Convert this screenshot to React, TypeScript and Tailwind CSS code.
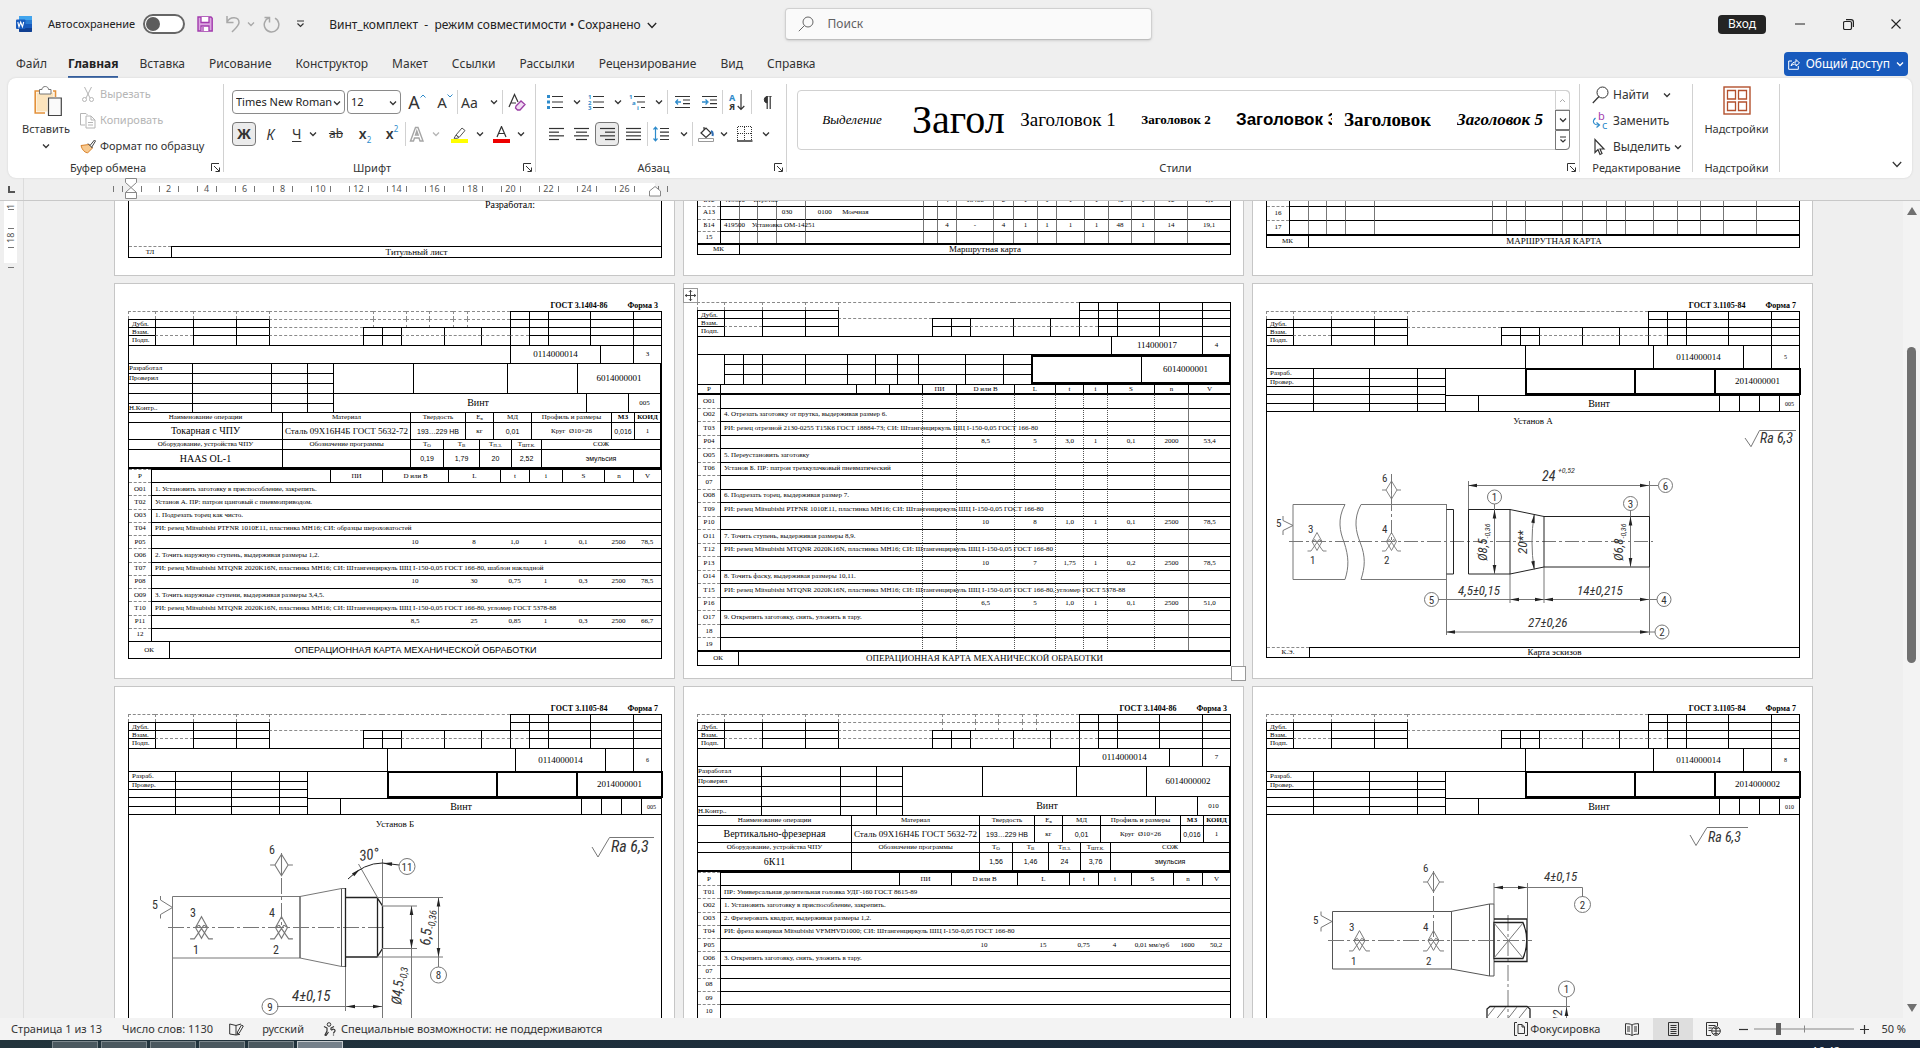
import React from 'react';

type Kids = { children?: React.ReactNode };

/* ---------- shared small pieces ---------- */

function Svg({ w, h, className = '', children }: { w: number; h: number; className?: string } & Kids) {
  return (
    <svg width={w} height={h} viewBox={`0 0 ${w} ${h}`} fill="none" stroke="currentColor" className={`shrink-0 ${className}`} aria-hidden="true">
      {children}
    </svg>
  );
}

function Chevron({ className = '' }: { className?: string }) {
  return (
    <Svg w={8} h={6} className={className}>
      <path d="M1 1.500 4 4.500 7 1.500" strokeWidth="1.300" />
    </Svg>
  );
}

function Divider() {
  return <span className="h-6 w-px shrink-0 bg-[#d1d1d1]" />;
}

function Launcher() {
  return (
    <button aria-label="Параметры" className="absolute right-1 bottom-1.5 text-[#333]">
      <Svg w={9} h={9}>
        <path d="M.5 8V.5H8M3 3l5 5M8.500 4.500V8.500H4.500" />
      </Svg>
    </button>
  );
}

function Group({ className, label, launcher, children }: { className: string; label: string; launcher?: boolean } & Kids) {
  return (
    <section className={`relative flex h-[100px] shrink-0 flex-col ${className}`}>
      <div className="min-h-0 flex-1">{children}</div>
      <div className={`pb-0.5 text-center text-[11px] leading-4 text-[#333] ${launcher ? 'pr-4' : ''}`}>{label}</div>
      {launcher && <Launcher />}
      <span className="absolute top-1.5 right-0 bottom-1.5 w-px bg-[#d1d1d1]" />
    </section>
  );
}

/* ---------- title bar ---------- */

function TitleBar() {
  return (
    <header className="flex h-12 items-center text-[12px] text-[#222]">
      <div className="flex min-w-0 flex-1 items-center pl-4">
        <Svg w={16} h={16}>
          <rect x="3" y="0" width="13" height="16" rx="1" fill="#2b7cd3" stroke="none" />
          <path d="M3 1a1 1 0 0 1 1-1h11a1 1 0 0 1 1 1v3H3z" fill="#41a5ee" stroke="none" />
          <path d="M3 8h13v4H3z" fill="#185abd" stroke="none" />
          <path d="M3 12h13v3a1 1 0 0 1-1 1H4a1 1 0 0 1-1-1z" fill="#103f91" stroke="none" />
          <rect x="0" y="3.500" width="9.500" height="9.500" rx="1" fill="#185abd" stroke="none" />
          <path d="M1.800 6 3 10.800 4.700 6.200 6.400 10.800 7.700 6" stroke="#fff" strokeWidth="1.100" />
        </Svg>
        <label className="ml-4 flex items-center gap-2">
          <span className="text-[11px] whitespace-nowrap">Автосохранение</span>
          <span className="relative flex h-5 w-[42px] items-center rounded-full border-2 border-[#666] bg-white">
            <input type="checkbox" className="absolute inset-0 appearance-none" />
            <span className="ml-px h-3.5 w-3.5 rounded-full bg-[#5c5c5c]" />
          </span>
        </label>
        <button aria-label="Сохранить" className="ml-3 text-[#a23bad]">
          <Svg w={16} h={16}>
            <path d="M1 1h13l1.200 1.200V15H1z" fill="#dba5e0" strokeWidth="1.400" />
            <path d="M4 1v5.500h8V1" fill="#fff" strokeWidth="1.300" />
            <path d="M4 15v-5h8v5" fill="#fff" strokeWidth="1.300" />
            <path d="M6 11v4" strokeWidth="1.300" />
          </Svg>
        </button>
        <button aria-label="Отменить" className="ml-3 flex items-center gap-1.5 text-[#a8a8a8]">
          <Svg w={16} h={18}>
            <path d="M2 1v6.500h6.500M2 7.200C5 1 14 1.500 14 7.500c0 3-3 5.500-7 9.500" strokeWidth="1.500" />
          </Svg>
          <Chevron />
        </button>
        <button aria-label="Повторить" className="ml-2 text-[#a8a8a8]">
          <Svg w={17} h={17}>
            <path d="M1.500 1.500H6.500V6.500M6 1.800A7.300 7.300 0 1 0 12 2.200" strokeWidth="1.500" />
          </Svg>
        </button>
        <button aria-label="Настройка панели" className="ml-4 text-[#333]">
          <Svg w={9} h={8}>
            <path d="M1 1h7M1.500 3.500l3 3 3-3" strokeWidth="1.200" />
          </Svg>
        </button>
        <button className="ml-6 flex items-center gap-1.5 pt-0.5 whitespace-pre">
          <span>Винт_комплект&nbsp; - &nbsp;режим совместимости • Сохранено</span>
          <Svg w={10} h={7}>
            <path d="M.8 1 5 5.500 9.200 1" strokeWidth="1.300" />
          </Svg>
        </button>
      </div>
      <label className="flex h-8 w-[367px] items-center gap-3.5 rounded border border-[#d0d0d0] border-b-[#bdbdbd] bg-[#fafafa] px-3 shadow-sm">
        <Svg w={16} h={16} className="text-[#666]">
          <circle cx="10" cy="6" r="5" />
          <path d="M6.500 9.500.8 15.200" />
        </Svg>
        <input aria-label="Поиск" placeholder="Поиск" className="w-full bg-transparent text-[12px] outline-none placeholder:text-[#616161]" />
      </label>
      <div className="flex min-w-0 flex-1 items-center justify-end">
        <button className="mr-2.5 h-[19px] w-12 rounded-sm bg-[#242424] text-[12px] leading-none text-white">Вход</button>
        <button aria-label="Свернуть" className="flex h-8 w-12 items-center justify-center">
          <Svg w={10} h={2}>
            <path d="M0 1h10" />
          </Svg>
        </button>
        <button aria-label="Развернуть" className="flex h-8 w-12 items-center justify-center">
          <Svg w={11} h={11}>
            <rect x=".5" y="2.500" width="8" height="8" rx="1.500" strokeWidth="1.200" />
            <path d="M3 .6h5a2.400 2.400 0 0 1 2.400 2.400V8" strokeWidth="1.200" />
          </Svg>
        </button>
        <button aria-label="Закрыть" className="flex h-8 w-12 items-center justify-center">
          <Svg w={10} h={10}>
            <path d="M.5.5l9 9M9.500.5l-9 9" strokeWidth="1.100" />
          </Svg>
        </button>
      </div>
    </header>
  );
}

const TABS = ['Файл', 'Главная', 'Вставка', 'Рисование', 'Конструктор', 'Макет', 'Ссылки', 'Рассылки', 'Рецензирование', 'Вид', 'Справка'];

function TabBar() {
  return (
    <nav className="flex h-[30px] items-center justify-between pt-px pr-3 pl-1 text-[12px] text-[#333]">
      <div className="flex">
        {TABS.map((t) =>
          t === 'Главная' ? (
            <button key={t} className="h-7 px-[9px]">
              <span className="border-b-2 border-[#2b579a] pb-1 font-bold text-[#222]">{t}</span>
            </button>
          ) : (
            <button key={t} className="h-7 px-3">{t}</button>
          ),
        )}
      </div>
      <button className="flex h-6 items-center gap-1.5 rounded bg-[#185abd] px-1 text-white">
        <Svg w={12} h={12}>
          <path d="M4 3H.7v8.300h9.600V8M3 8c.5-3 2.500-4 5-4V1.500L11.500 5 8 8V6C6 6 4 6.500 3 8z" />
        </Svg>
        Общий доступ
        <Chevron />
      </button>
    </nav>
  );
}

/* ---------- ribbon ---------- */

function Lines({ rows }: { rows: [number, number][] }) {
  return (
    <Svg w={15} h={14}>
      {rows.map(([a, b], i) => (
        <path key={i} d={`M${a} ${1.5 + i * 3.67}H${b}`} strokeWidth="1.200" />
      ))}
    </Svg>
  );
}

function IconBtn({ label, w, children }: { label: string; w: string } & Kids) {
  return (
    <button aria-label={label} className={`flex h-6 shrink-0 items-center justify-center ${w}`}>
      {children}
    </button>
  );
}

function SplitBtn({ label, w, dim, children }: { label: string; w: string; dim?: boolean } & Kids) {
  return (
    <button aria-label={label} className={`flex h-6 shrink-0 items-center justify-between pr-1 pl-[3px] ${w}`}>
      {children}
      <Chevron className={dim ? 'text-[#b5b5b5]' : ''} />
    </button>
  );
}

function Combo({ label, value, w }: { label: string; value: string; w: string }) {
  return (
    <span className={`relative flex h-6 shrink-0 ${w}`}>
      <select aria-label={label} className="h-6 w-full appearance-none rounded border border-[#8a8a8a] bg-white pr-3 pl-[3px] text-[11px] text-[#222]">
        <option>{value}</option>
      </select>
      <Chevron className="pointer-events-none absolute top-[10px] right-1" />
    </span>
  );
}

function Clipboard() {
  return (
    <Group className="w-[216px]" label="Буфер обмена" launcher>
      <div className="flex pt-2 pl-3">
        <button className="flex w-[52px] flex-col items-center text-[11px] leading-4 text-[#333]">
          <Svg w={28} h={31} className="ml-1">
            <path d="M9 5H1.200v22H11M19 5h2.500v6" stroke="#e3913a" strokeWidth="1.600" />
            <path d="M2.500 6.500h17v5h-6v14h-11z" fill="#fce4bd" stroke="none" />
            <path d="M5.500 3.500h2.500c0-4 6.500-4 6.500 0H17V8H5.500z" fill="#fff" stroke="#777" />
            <path d="M14.500 12h12.800v17.500H14.500z" fill="#fafafa" stroke="#444" strokeWidth="1.200" />
          </Svg>
          <span className="mt-1">Вставить</span>
          <Chevron className="mt-1.5" />
        </button>
        <div className="ml-2 flex flex-col gap-2.5 text-[11px] leading-4 text-[#b5b5b5]">
          <button className="flex h-4 items-center gap-1">
            <Svg w={16} h={17}>
              <path d="M4.500 1 10 12M11.500 1 6 12" />
              <circle cx="4.500" cy="13.500" r="2" />
              <circle cx="11.500" cy="13.500" r="2" />
            </Svg>
            Вырезать
          </button>
          <button className="flex h-4 items-center gap-1">
            <Svg w={16} h={17}>
              <path d="M5 13H.5V1.500H6l1.500 1.500" />
              <path d="M6 4h5l4 4v8H6zM11 4v4h4M8 10.500h5M8 13h5" />
            </Svg>
            Копировать
          </button>
          <button className="flex h-4 items-center gap-1 whitespace-nowrap text-[#333]">
            <Svg w={16} h={17}>
              <path d="M9 6.500 1 7.500c1 4 3 6.500 6.500 7.500l5-5z" fill="#f7c98f" stroke="#d9822b" />
              <path d="M8 5.500 12.500 10M10 7.500l4.500-5.500 1 1-4 6.500" fill="#fff" stroke="#444" />
            </Svg>
            Формат по образцу
          </button>
        </div>
      </div>
    </Group>
  );
}

function FontGroup() {
  return (
    <Group className="w-[312px]" label="Шрифт" launcher>
      <div className="flex items-center pt-3 pl-2">
        <Combo label="Шрифт" value="Times New Roman" w="w-[113px]" />
        <span className="w-0.5" />
        <Combo label="Размер шрифта" value="12" w="w-[54px]" />
        <IconBtn label="Увеличить размер" w="w-8">
          <span className="text-[18px] leading-none">A</span>
          <Svg w={6} h={4} className="mb-3 text-[#2e8bcb]"><path d="M.5 3.500 3 1l2.500 2.500" /></Svg>
        </IconBtn>
        <IconBtn label="Уменьшить размер" w="w-6">
          <span className="text-[15px] leading-none">A</span>
          <Svg w={6} h={4} className="mb-3 text-[#2e8bcb]"><path d="M.5.5 3 3 5.500.5" /></Svg>
        </IconBtn>
        <Divider />
        <SplitBtn label="Регистр" w="w-11"><span className="text-[14px]">Aa</span></SplitBtn>
        <Divider />
        <IconBtn label="Очистить формат" w="w-7">
          <Svg w={18} h={18}>
            <path d="M1 14 6.500 1.500 10 9M3 10h5" strokeWidth="1.200" />
            <path d="m8 13 5-5 4 3.500-5 5.500H9.500L7.500 15z" stroke="#9b3fa5" strokeWidth="1.300" fill="#f1dcf3" />
          </Svg>
        </IconBtn>
      </div>
      <div className="flex items-center pt-2 pl-2">
        <button className="h-6 w-6 rounded border border-[#777] bg-[#ebebeb] text-[14px] leading-none font-bold">Ж</button>
        <IconBtn label="Курсив" w="w-[29px]"><span className="text-[14px] italic">К</span></IconBtn>
        <SplitBtn label="Подчёркнутый" w="w-9"><span className="pl-1 text-[14px] leading-4 underline underline-offset-2">Ч</span></SplitBtn>
        <IconBtn label="Зачёркнутый" w="w-[30px]"><span className="text-[12px] line-through">ab</span></IconBtn>
        <IconBtn label="Подстрочный" w="w-7">
          <span className="text-[14px] leading-none font-semibold">x</span>
          <span className="mt-3 text-[8px] leading-none text-[#2e8bcb]">2</span>
        </IconBtn>
        <IconBtn label="Надстрочный" w="w-[26px]">
          <span className="text-[14px] leading-none font-semibold">x</span>
          <span className="mb-2.5 text-[8px] leading-none text-[#2e8bcb]">2</span>
        </IconBtn>
        <Divider />
        <SplitBtn label="Эффекты" w="w-[38px]" dim>
          <Svg w={16} h={17} className="text-[#a5a5a5]">
            <path d="M1.500 15 6.500 1.500h2.500L14 15h-3l-1-3H5.500l-1 3zM6.500 9h2.700L7.800 5z" strokeWidth="1.400" />
          </Svg>
        </SplitBtn>
        <SplitBtn label="Цвет выделения" w="w-11">
          <Svg w={17} h={17} className="ml-1">
            <path d="m5 9 6-7 3 2.500-6 7zM5 9l3 2.500-2 .8H3z" stroke="#555" />
            <path d="M0 13h17v4H0z" fill="#ffff00" stroke="none" />
          </Svg>
        </SplitBtn>
        <SplitBtn label="Цвет текста" w="w-[41px]">
          <Svg w={17} h={17} className="ml-0.5">
            <path d="M4 11 8.500.5 13 11M5.500 7.500h6" strokeWidth="1.200" />
            <path d="M0 13h17v4H0z" fill="#ee0000" stroke="none" />
          </Svg>
        </SplitBtn>
      </div>
    </Group>
  );
}

function ParagraphGroup() {
  const num = 'fill-[#2e8bcb] stroke-none text-[6px] font-bold';
  return (
    <Group className="w-[251px]" label="Абзац" launcher>
      <div className="flex items-center pt-3 pl-2">
        <SplitBtn label="Маркеры" w="w-[41px]">
          <Svg w={16} h={16}>
            <path d="M5 2.500h11M5 8h11M5 13.500h11" strokeWidth="1.200" />
            <path d="M0 1h3v3H0zM0 6.500h3v3H0zM0 12h3v3H0z" fill="#2e8bcb" stroke="none" />
          </Svg>
        </SplitBtn>
        <SplitBtn label="Нумерация" w="w-[41px]">
          <Svg w={16} h={16}>
            <path d="M5 2.500h11M5 8h11M5 13.500h11" strokeWidth="1.200" />
            <text x="0" y="5" className={num}>1</text>
            <text x="0" y="10.500" className={num}>2</text>
            <text x="0" y="16" className={num}>3</text>
          </Svg>
        </SplitBtn>
        <SplitBtn label="Многоуровневый список" w="w-[41px]">
          <Svg w={16} h={16}>
            <path d="M5 2.500h11M8 8h8M12 13.500h4" strokeWidth="1.200" />
            <text x="0" y="5" className={num}>1</text>
            <text x="3" y="10.500" className={num}>a</text>
            <text x="8" y="16" className={num}>i</text>
          </Svg>
        </SplitBtn>
        <Divider />
        <IconBtn label="Уменьшить отступ" w="w-[29px]">
          <Svg w={15} h={14}>
            <path d="M0 1.500h15M8 5h7M8 8.700h7M0 12.500h15" strokeWidth="1.200" />
            <path d="M6 7H1M3 4.500.7 7 3 9.500" stroke="#2e8bcb" strokeWidth="1.300" />
          </Svg>
        </IconBtn>
        <IconBtn label="Увеличить отступ" w="w-[25px]">
          <Svg w={15} h={14}>
            <path d="M0 1.500h15M8 5h7M8 8.700h7M0 12.500h15" strokeWidth="1.200" />
            <path d="M0 7h5M3.500 4.500 6 7 3.500 9.500" stroke="#2e8bcb" strokeWidth="1.300" />
          </Svg>
        </IconBtn>
        <Divider />
        <IconBtn label="Сортировка" w="w-7">
          <span className="flex flex-col text-[9px] leading-[9px] font-bold"><span className="text-[#2e8bcb]">А</span><span>Я</span></span>
          <Svg w={8} h={17} className="ml-0.5"><path d="M4 0v15.500M.7 12 4 15.500 7.300 12" strokeWidth="1.200" /></Svg>
        </IconBtn>
        <Divider />
        <IconBtn label="Знаки абзаца" w="w-[29px]">
          <Svg w={10} h={13}>
            <path d="M5 0h5M5 7a3.300 3.300 0 0 1 0-6.500z" fill="currentColor" />
            <path d="M5.200 0v13M8.200 0v13" strokeWidth="1.200" />
          </Svg>
        </IconBtn>
      </div>
      <div className="flex items-center pt-2 pl-2">
        <IconBtn label="По левому краю" w="w-6"><Lines rows={[[0, 15], [0, 10], [0, 15], [0, 10]]} /></IconBtn>
        <IconBtn label="По центру" w="w-[27px]"><Lines rows={[[0, 15], [2, 13], [0, 15], [2, 13]]} /></IconBtn>
        <button aria-label="По правому краю" className="flex h-6 w-6 shrink-0 items-center justify-center rounded border border-[#777] bg-[#ebebeb]">
          <Lines rows={[[0, 15], [5, 15], [0, 15], [5, 15]]} />
        </button>
        <IconBtn label="По ширине" w="w-7"><Lines rows={[[0, 15], [0, 15], [0, 15], [0, 15]]} /></IconBtn>
        <Divider />
        <SplitBtn label="Интервал" w="w-11">
          <Svg w={16} h={16} className="ml-0.5">
            <path d="M7 2.500h9M7 6.200h9M7 9.800h9M7 13.500h9" strokeWidth="1.200" />
            <path d="M2.500 1v14M.5 3.500l2-2.300 2 2.300M.5 12.500l2 2.300 2-2.300" stroke="#2e8bcb" strokeWidth="1.200" />
          </Svg>
        </SplitBtn>
        <Divider />
        <SplitBtn label="Заливка" w="w-[39px]">
          <Svg w={16} h={16} className="ml-0.5">
            <path d="m3 7 5-5 5 5-5 4.500zM6 4V1" strokeWidth="1.200" />
            <path d="M13 5c2 1 2 3 1.500 5" stroke="#2e6db4" strokeWidth="2" />
            <path d="M.5 12.500h15v3H.5z" stroke="#999" fill="#fff" />
          </Svg>
        </SplitBtn>
        <SplitBtn label="Границы" w="w-[42px]">
          <Svg w={16} h={16} className="ml-0.5">
            <path d="M1 .5h14M1 7.500h14M.5 1v13M7.500 1v13M14.500 1v13" strokeDasharray="1 1" />
            <path d="M0 15h15.500" strokeWidth="1.500" />
          </Svg>
        </SplitBtn>
      </div>
    </Group>
  );
}

const STYLES: { name: string; cls: string; wrap: string }[] = [
  { name: 'Выделение', cls: 'text-[13px] italic', wrap: 'justify-center' },
  { name: 'Загол', cls: 'text-[40px] leading-[48px]', wrap: 'justify-start' },
  { name: 'Заголовок 1', cls: 'text-[19px]', wrap: 'justify-center' },
  { name: 'Заголовок 2', cls: 'text-[13px] font-bold', wrap: 'justify-center' },
  { name: 'Заголовок 3', cls: "text-[17px] font-bold font-['Liberation_Sans',sans-serif]", wrap: 'justify-start' },
  { name: 'Заголовок', cls: 'text-[19px] font-bold', wrap: 'justify-start' },
  { name: 'Заголовок 5', cls: 'text-[17px] font-bold italic', wrap: 'justify-center' },
];

function StylesGroup() {
  return (
    <Group className="min-w-0 flex-1" label="Стили" launcher>
      <div className="mt-3 mr-2.5 ml-2.5 flex h-[60px] rounded border border-[#d1d1d1]">
        <div className="flex min-w-0 flex-1 font-['Liberation_Serif',serif] text-black">
          {STYLES.map((s) => (
            <button key={s.name} className={`flex w-[108px] shrink-0 items-center px-1.5 ${s.wrap}`}>
              <span className={`overflow-hidden whitespace-nowrap ${s.cls}`}>{s.name}</span>
            </button>
          ))}
        </div>
        <div className="-my-px -mr-px flex w-[15px] flex-col">
          <button aria-label="Вверх" className="flex flex-1 items-center justify-center rounded-tr border border-[#d1d1d1] text-[#aaa]">
            <Svg w={7} h={5}><path d="M1 4 3.500 1.500 6 4" /></Svg>
          </button>
          <button aria-label="Вниз" className="flex flex-1 items-center justify-center border border-[#777]"><Chevron /></button>
          <button aria-label="Ещё" className="flex flex-1 items-center justify-center rounded-br border border-[#777]">
            <Svg w={8} h={8}><path d="M1 1h6M1.500 3.500 4 6l2.500-2.500" strokeWidth="1.200" /></Svg>
          </button>
        </div>
      </div>
    </Group>
  );
}

function EditGroup() {
  return (
    <Group className="w-[113px]" label="Редактирование">
      <div className="flex flex-col pt-1 pl-3 text-[12px] text-[#333]">
        <button className="flex h-[26px] items-center gap-1">
          <Svg w={17} h={18}>
            <circle cx="10.500" cy="6.500" r="5.500" />
            <path d="M7 10.500.8 17" strokeWidth="1.200" />
          </Svg>
          Найти
          <Chevron className="ml-2.5" />
        </button>
        <button className="flex h-[26px] items-center gap-1">
          <Svg w={17} h={18}>
            <text x="6" y="8" className="fill-[#a23bad] stroke-none text-[11px]">b</text>
            <text x="10" y="17" className="fill-[#2e8bcb] stroke-none text-[11px]">c</text>
            <path d="M3.500 6C0 9 1 13 7 13M4.500 10.500 7.500 13l-3 2.500" stroke="#2e8bcb" strokeWidth="1.200" />
          </Svg>
          Заменить
        </button>
        <button className="flex h-[26px] items-center gap-1">
          <Svg w={17} h={18}>
            <path d="M3 1.500v13l3-3 2 5 2-1-2-4.500h4z" strokeWidth="1.200" />
          </Svg>
          Выделить
          <Chevron />
        </button>
      </div>
    </Group>
  );
}

function Ribbon() {
  return (
    <div className="mx-2 flex h-[100px] rounded-lg bg-white text-[#333] shadow-[0_0_2px_#ccc]">
      <Clipboard />
      <FontGroup />
      <ParagraphGroup />
      <StylesGroup />
      <EditGroup />
      <Group className="w-[87px]" label="Надстройки">
        <button className="flex w-full flex-col items-center pt-2 text-[11px] leading-4">
          <Svg w={28} h={29} className="text-[#b3502d]">
            <rect x="1" y="1" width="26" height="27" strokeWidth="1.400" />
            <path d="M4.500 4.500h8v8.500h-8zM15.500 4.500h8v8.500h-8zM4.500 16h8v8.500h-8zM15.500 16h8v8.500h-8z" strokeWidth="1.300" />
          </Svg>
          <span className="mt-1.5">Надстройки</span>
        </button>
      </Group>
      <div className="flex w-[132px] items-end justify-end pr-2.5 pb-2.5">
        <button aria-label="Свернуть ленту">
          <Svg w={10} h={7}><path d="M.8 1 5 5.500 9.200 1" strokeWidth="1.200" /></Svg>
        </button>
      </div>
    </div>
  );
}

/* ---------- rulers ---------- */

function TopRuler() {
  const marks = Array.from({ length: 13 }, (_, i) => (i + 1) * 2);
  return (
    <div className="flex h-[23px] border-b border-[#c8c8c8] text-[9px] text-[#555]">
      <div className="flex w-6 items-center justify-center border-r border-[#dcdcdc]">
        <span className="h-[7px] w-[7px] border-b-2 border-l-2 border-[#555]" />
      </div>
      <div className="flex flex-1 justify-center">
        <div className="flex w-[1699px] items-center pl-[15px]">
          <div className="relative h-3 w-[525px] bg-white">
            <div className="flex h-full items-center pl-5">
              {marks.map((m) => (
                <div key={m} className="flex w-[38px] shrink-0 items-center justify-center">
                  <span className="h-1.5 w-px bg-[#777]" />
                  <span className="w-[18px] text-center leading-3">{m}</span>
                  <span className="h-1.5 w-px bg-[#777]" />
                </div>
              ))}
            </div>
            <Svg w={40} h={24} className="absolute -top-1.5 -left-5 text-[#888]">
              <path d="M3.500 9v6M12.500 9v6M31.500 9v6" stroke="#777" />
              <path d="M15.500 1.500h11v4l-5.500 5-5.500-5zM15.500 15.500l5.500-5 5.500 5v6h-11zM15.500 15.500h11" fill="#fff" />
            </Svg>
            <Svg w={30} h={14} className="absolute top-0 -right-5 text-[#888]">
              <path d="M22.500 3v6M13.500 3v6" stroke="#777" />
              <path d="M4.500 13V8L10 3.500 15.500 8v5z" fill="#fff" />
            </Svg>
          </div>
        </div>
      </div>
      <div className="w-4" />
    </div>
  );
}

function SideRuler() {
  return (
    <div className="flex w-6 shrink-0 flex-col items-start overflow-hidden border-r border-[#dcdcdc] pl-1 text-[9px] text-[#555]">
      <div className="flex h-[62px] w-[13px] flex-col items-center bg-white">
        <span className="-mt-1 h-3 rotate-180 leading-3 [writing-mode:vertical-rl]">1</span>
        <span className="h-px w-1.5 bg-[#777]" />
        <span className="mt-[18px] h-px w-1.5 bg-[#777]" />
        <span className="h-[18px] rotate-180 text-center leading-3 [writing-mode:vertical-rl]">18</span>
        <span className="h-px w-1.5 bg-[#777]" />
      </div>
      <span className="mt-1 ml-1 h-px w-1.5 bg-[#777]" />
    </div>
  );
}

/* ---------- document forms ---------- */

const TOP: Record<string, string> = {
  s: 'border-t border-t-black',
  d: 'border-t border-t-[#8a8a8a] [border-top-style:dashed]',
  '-': '',
};
const LEFT: Record<string, string> = {
  s: 'border-l border-l-black',
  d: 'border-l border-l-[#8a8a8a] [border-left-style:dashed]',
  '-': '',
};

const STAMP_PLAIN = 'grid-cols-[27px_38px_43px_33px_94px_19px_19px_43px_37px_29px_19px_19px_42px_43px_28px]';
const STAMP_TICKS = 'grid-cols-[27px_38px_43px_33px_104px_33px_23px_24px_14px_43px_19px_19px_42px_43px_28px]';

function StampRow({ cols, h, top, left, label }: { cols: string; h: string; top: string; left: string; label?: string }) {
  return (
    <div className={`grid border-r border-black ${cols} ${h}`}>
      {top.split('').map((t, i) => (
        <div key={i} className={`pl-[3px] leading-[8px] ${TOP[t]} ${LEFT[left[i]]}`}>
          {i === 0 ? label : null}
        </div>
      ))}
    </div>
  );
}

function Stamp({ form3 }: { form3?: boolean }) {
  const fine = form3 ? STAMP_TICKS : STAMP_PLAIN;
  return (
    <div className="text-[7px]">
      <StampRow cols={fine} h="h-2" top="ddddddddddsssss" left={form3 ? 'ddddddddddsssss' : 'ddddd-----sssss'} />
      <StampRow cols={fine} h="h-2" label="Дубл." top={form3 ? 'ssssddddddsssss' : 'ssss------sssss'} left={form3 ? 'sssssdddddsssss' : 'sssss-----sssss'} />
      <StampRow cols={STAMP_PLAIN} h="h-2" label="Взам." top="ssssdssssssssss" left="sssssssssssssss" />
      <StampRow cols={STAMP_PLAIN} h="h-2.5" label="Подп." top={form3 ? 'sdssdssddddssss' : 'sdss-ssddddssss'} left="sssssssssssssss" />
    </div>
  );
}

function C({ className = '', children }: { className?: string } & Kids) {
  return <div className={`flex items-center justify-center border-t border-l border-black whitespace-nowrap ${className}`}>{children}</div>;
}

function Blank({ n }: { n: number }) {
  return (
    <>
      {Array.from({ length: n }, (_, i) => (
        <C key={i} />
      ))}
    </>
  );
}

function Page({ className = '', children }: { className?: string } & Kids) {
  return (
    <article className={`flex w-[561px] flex-col border border-[#c6c6c6] bg-white pr-3 pl-[13px] font-['Liberation_Serif',serif] leading-none text-black ${className}`}>
      {children}
    </article>
  );
}

function FormTitle({ gost, form }: { gost: string; form: string }) {
  return (
    <div className="flex h-[27px] items-end justify-end gap-5 pr-1 text-[8px] leading-[10px] font-bold">
      <span>{gost}</span>
      <span>Форма {form}</span>
    </div>
  );
}

const OP_HEAD = ['ПИ', 'D или B', 'L', 't', 'i', 'S', 'n', 'V'];
type OpRow = { id: string; text?: string; vals?: string[] };

function OpTable({ rows, h }: { rows: OpRow[]; h: string }) {
  return (
    <table className={`w-full table-fixed border-separate border-spacing-0 border-r border-l border-black text-center text-[7px] leading-none whitespace-nowrap ${h}`}>
      <colgroup>
        <col className="w-[22px]" />
        <col className="w-[179px]" />
        <col className="w-[52px]" />
        <col className="w-[66px]" />
        <col className="w-[52px]" />
        <col className="w-[29px]" />
        <col className="w-[33px]" />
        <col className="w-[42px]" />
        <col className="w-[29px]" />
        <col className="w-[28px]" />
      </colgroup>
      <thead>
        <tr className="h-[13px]">
          <th className={`p-0 font-normal ${TOP.d}`}>Р</th>
          <th className="border-t border-l border-black p-0" />
          {OP_HEAD.map((t) => (
            <th key={t} className="border-t border-l border-black p-0 font-normal">{t}</th>
          ))}
        </tr>
      </thead>
      <tbody>
        {rows.map((r) => (
          <tr key={r.id}>
            <td className={`p-0 ${TOP.d}`}>{r.id}</td>
            {r.vals ? (
              <>
                <td colSpan={2} className="border-t border-l border-black p-0" />
                {r.vals.map((v, i) => (
                  <td key={i} className="border-t border-black p-0">{v}</td>
                ))}
              </>
            ) : (
              <td colSpan={9} className="border-t border-l border-black p-0 pl-[3px] text-left">{r.text}</td>
            )}
          </tr>
        ))}
      </tbody>
    </table>
  );
}

type OpCard = {
  page: string; code: string; op: string; name: string; machine: string;
  t: string[]; rows: OpRow[];
};

function OperationPage({ page, code, op, name, machine, t, rows }: OpCard) {
  const roles = ['Разработал', 'Проверил', '', '', 'Н.Контр..'];
  return (
    <Page className="h-[396px]">
      <FormTitle gost="ГОСТ 3.1404-86" form="3" />
      <Stamp form3 />
      <div className="grid h-[18px] grid-cols-[382px_90px_33px_28px] border-r border-black text-[9px]">
        <C />
        <C>0114000014</C>
        <C />
        <C className="text-[7px]">{page}</C>
      </div>
      <div className="border-r-2 border-black">
        <div className="flex h-[49px]">
          <div className="grid w-[205px] grid-cols-[64px_79px_36px_26px] grid-rows-[10px_10px_10px_10px_9px] text-[7px]">
            {roles.map((r, i) => (
              <React.Fragment key={i}>
                <C className="justify-start">{r}</C>
                <Blank n={3} />
              </React.Fragment>
            ))}
          </div>
          <div className="flex flex-1 flex-col text-[9px]">
            <div className="grid h-[30px] grid-cols-[80px_94px_70px_1fr]">
              <Blank n={3} />
              <C>{code}</C>
            </div>
            <div className="grid h-[19px] grid-cols-[253px_42px_1fr]">
              <C className="pl-9 text-[10px]">Винт</C>
              <C />
              <C className="text-[7px]">{op}</C>
            </div>
          </div>
        </div>
        <div className="grid grid-cols-[154px_128px_55px_28px_38px_80px_23px_1fr] grid-rows-[10px_17px] text-[7px]">
          <C>Наименование операции</C>
          <C>Материал</C>
          <C>Твердость</C>
          <C>E<sub className="text-[5px]">в</sub></C>
          <C>МД</C>
          <C>Профиль и размеры</C>
          <C className="font-bold">МЗ</C>
          <C className="font-bold">КОИД</C>
          <C className="text-[10px]">{name}</C>
          <C className="text-[9px]">Сталь 09Х16Н4Б ГОСТ 5632-72</C>
          <C className="font-['Liberation_Sans',sans-serif]">193…229 НВ</C>
          <C>кг</C>
          <C className="font-['Liberation_Sans',sans-serif]">0,01</C>
          <C>Круг&nbsp; Ø10×26</C>
          <C className="font-['Liberation_Sans',sans-serif]">0,016</C>
          <C>1</C>
        </div>
        <div className="grid grid-cols-[154px_128px_33px_36px_32px_30px_1fr] grid-rows-[10px_18px] border-b-2 border-black text-[7px]">
          <C>Оборудование, устройства ЧПУ</C>
          <C>Обозначение программы</C>
          <C>T<sub className="text-[5px]">О</sub></C>
          <C>T<sub className="text-[5px]">В</sub></C>
          <C>T<sub className="text-[5px]">П.З.</sub></C>
          <C>T<sub className="text-[5px]">ШТ.К.</sub></C>
          <C>СОЖ</C>
          <C className="text-[10px]">{machine}</C>
          <C />
          {t.map((v) => (
            <C key={v} className="font-['Liberation_Sans',sans-serif]">{v}</C>
          ))}
          <C className="font-['Liberation_Sans',sans-serif]">эмульсия</C>
        </div>
      </div>
      <OpTable rows={rows} h="h-[172px] shrink-0" />
      <div className="grid h-[18px] shrink-0 grid-cols-[41px_1fr] border-r border-b border-black">
        <C className="text-[7px]">ОК</C>
        <C className="font-['Liberation_Sans',sans-serif] text-[9px]">ОПЕРАЦИОННАЯ КАРТА МЕХАНИЧЕСКОЙ ОБРАБОТКИ</C>
      </div>
    </Page>
  );
}

const OP5: OpRow[] = [
  { id: 'О01', text: '1. Установить заготовку в приспособление, закрепить.' },
  { id: 'Т02', text: 'Установ А. ПР: патрон цанговый с пневмоприводом.' },
  { id: 'О03', text: '1. Подрезать торец как чисто.' },
  { id: 'Т04', text: 'РИ: резец Mitsubishi PTFNR 1010E11, пластинка МН16;  СИ: образцы шероховатостей' },
  { id: 'Р05', vals: ['10', '8', '1,0', '1', '0,1', '2500', '78,5'] },
  { id: 'О06', text: '2. Точить наружную ступень, выдерживая размеры 1,2.' },
  { id: 'Т07', text: 'РИ: резец Mitsubishi MTQNR 2020K16N, пластинка МН16;  СИ: Штангенциркуль ШЦ I-150-0,05 ГОСТ 166-80, шаблон накладной' },
  { id: 'Р08', vals: ['10', '30', '0,75', '1', '0,3', '2500', '78,5'] },
  { id: 'О09', text: '3. Точить наружные ступени, выдерживая размеры 3,4,5.' },
  { id: 'Т10', text: 'РИ: резец Mitsubishi MTQNR 2020K16N, пластинка МН16;  СИ: Штангенциркуль ШЦ I-150-0,05 ГОСТ 166-80, угломер ГОСТ 5378-88' },
  { id: 'Р11', vals: ['8,5', '25', '0,85', '1', '0,3', '2500', '66,7'] },
  { id: '12' },
];

const OP10: OpRow[] = [
  { id: 'Т01', text: 'ПР: Универсальная делительная головка УДГ-160 ГОСТ 8615-89' },
  { id: 'О02', text: '1. Установить заготовку в приспособление, закрепить.' },
  { id: 'О03', text: '2. Фрезеровать квадрат, выдерживая размеры 1,2.' },
  { id: 'Т04', text: 'РИ: фреза концевая Mitsubishi VFMHVD1000;  СИ: Штангенциркуль ШЦ I-150-0,05 ГОСТ 166-80' },
  { id: 'Р05', vals: ['10', '15', '0,75', '4', '0,01 мм/зуб', '1600', '50,2'] },
  { id: 'О06', text: '3. Открепить заготовку, снять, уложить в тару.' },
  { id: '07' }, { id: '08' }, { id: '09' }, { id: '10' }, { id: '11' }, { id: '12' },
];

const OP_CONT: OpRow[] = [
  { id: 'О01' },
  { id: 'О02', text: '4. Отрезать заготовку от прутка, выдерживая размер 6.' },
  { id: 'Т03', text: 'РИ: резец отрезной 2130-0255 Т15К6 ГОСТ 18884-73;  СИ: Штангенциркуль ШЦ I-150-0,05 ГОСТ 166-80' },
  { id: 'Р04', vals: ['8,5', '5', '3,0', '1', '0,1', '2000', '53,4'] },
  { id: 'О05', text: '5. Переустановить заготовку' },
  { id: 'Т06', text: 'Установ Б. ПР: патрон трехкулачковый пневматический' },
  { id: '07' },
  { id: 'О08', text: '6. Подрезать торец, выдерживая размер 7.' },
  { id: 'Т09', text: 'РИ: резец Mitsubishi PTFNR 1010E11, пластинка МН16;  СИ: Штангенциркуль ШЦ I-150-0,05 ГОСТ 166-80' },
  { id: 'Р10', vals: ['10', '8', '1,0', '1', '0,1', '2500', '78,5'] },
  { id: 'О11', text: '7. Точить ступень, выдерживая размеры 8,9.' },
  { id: 'Т12', text: 'РИ: резец Mitsubishi MTQNR 2020K16N, пластинка МН16;  СИ: Штангенциркуль ШЦ I-150-0,05 ГОСТ 166-80' },
  { id: 'Р13', vals: ['10', '7', '1,75', '1', '0,2', '2500', '78,5'] },
  { id: 'О14', text: '8. Точить фаску, выдерживая размеры 10,11.' },
  { id: 'Т15', text: 'РИ: резец Mitsubishi MTQNR 2020K16N, пластинка МН16;  СИ: Штангенциркуль ШЦ I-150-0,05 ГОСТ 166-80, угломер ГОСТ 5378-88' },
  { id: 'Р16', vals: ['6,5', '5', '1,0', '1', '0,1', '2500', '51,0'] },
  { id: 'О17', text: '9. Открепить заготовку, снять, уложить в тару.' },
  { id: '18' },
  { id: '19' },
];

function ContinuationPage() {
  const dotted = 'border-l border-l-[#555] [border-left-style:dotted]';
  return (
    <Page className="relative h-[396px] pt-[18px]">
      <Stamp />
      <div className="grid h-[18px] shrink-0 grid-cols-[414px_91px_28px] border-r border-black text-[9px]">
        <C />
        <C>114000017</C>
        <C className="text-[7px]">4</C>
      </div>
      <div className="flex h-[30px] shrink-0 border-t border-l border-black">
        <div className="w-[26px]" />
        <div className="-mt-px grid w-[307px] grid-cols-[19px_19px_43px_42px_28px_22px_21px_47px_38px_28px] grid-rows-[10px_10px_10px]">
          <Blank n={30} />
        </div>
        <div className="grid flex-1 grid-cols-[108px_1fr] border-2 border-black text-[9px]">
          <span />
          <span className="flex items-center justify-center border-l border-black">6014000001</span>
        </div>
      </div>
      <table className="h-[267px] w-full shrink-0 table-fixed border-separate border-spacing-0 border-r border-l border-black text-center text-[7px] leading-none whitespace-nowrap">
        <colgroup>
          <col className="w-[22px]" />
          <col className="w-[136px]" />
          <col className="w-[33px]" />
          <col className="w-[33px]" />
          <col className="w-[34px]" />
          <col className="w-[58px]" />
          <col className="w-[41px]" />
          <col className="w-[28px]" />
          <col className="w-[24px]" />
          <col className="w-[47px]" />
          <col className="w-[34px]" />
          <col className="w-[42px]" />
        </colgroup>
        <thead>
          <tr className="h-2.5">
            {['Р', '', '', '', ...OP_HEAD].map((t, i) => (
              <th key={i} className={`border-t border-b border-black p-0 font-normal ${i ? 'border-l' : ''}`}>{t}</th>
            ))}
          </tr>
        </thead>
        <tbody>
          {OP_CONT.map((r, n) => (
            <tr key={r.id}>
              <td className={`p-0 ${n ? TOP.d : TOP.s}`}>{r.id}</td>
              <td colSpan={3} className="overflow-visible border-t border-l border-black p-0 pl-[3px] text-left">{r.text}</td>
              <td className={`border-t border-t-black p-0 ${dotted}`} />
              {(r.vals ?? ['', '', '', '', '', '', '']).map((v, i) => (
                <td key={i} className={`border-t border-t-black p-0 ${i === 6 ? 'border-l border-l-[#777]' : dotted}`}>{v}</td>
              ))}
            </tr>
          ))}
        </tbody>
      </table>
      <div className="-mt-px grid h-4 shrink-0 grid-cols-[41px_1fr] border-t border-r border-b border-black">
        <C className="text-[7px]">ОК</C>
        <C className="text-[9px]">ОПЕРАЦИОННАЯ КАРТА МЕХАНИЧЕСКОЙ ОБРАБОТКИ</C>
      </div>
      <span className="absolute top-1 -left-px flex h-[15px] w-[15px] items-center justify-center border border-[#999] bg-white text-[#444]">
        <Svg w={11} h={11}>
          <path d="M5.500 0v11M0 5.500h11M4 1.800 5.500.3 7 1.800M4 9.200l1.500 1.500L7 9.200M1.800 4 .3 5.500l1.500 1.500M9.200 4l1.500 1.500L9.200 7" />
        </Svg>
      </span>
      <span className="absolute -right-[3px] -bottom-[3px] h-[15px] w-[15px] border border-[#999] bg-white" />
    </Page>
  );
}

/* ---------- sketch pages ---------- */

const INK = '#222';
const GREY = '#777';

function Arrow({ x, y, a }: { x: number; y: number; a: number }) {
  return <path d="M0 0-9 -1.800-9 1.800z" transform={`translate(${x} ${y}) rotate(${a})`} fill={INK} stroke="none" />;
}

function Dim({ x1, y1, x2, y2 }: { x1: number; y1: number; x2: number; y2: number }) {
  const a = x1 === x2 ? 90 : 0;
  return (
    <g>
      <path d={`M${x1} ${y1}L${x2} ${y2}`} />
      <Arrow x={x1} y={y1} a={a + 180} />
      <Arrow x={x2} y={y2} a={a} />
    </g>
  );
}

function Mark({ x, y, n, r = 7 }: { x: number; y: number; n: string; r?: number }) {
  return (
    <g>
      <circle cx={x} cy={y} r={r} />
      <text x={x} y={y + 4} textAnchor="middle" className="fill-[#333] stroke-none text-[11px]">{n}</text>
    </g>
  );
}

function T({ x, y, s = 11, a = 0, it = true, children }: { x: number; y: number; s?: number; a?: number; it?: boolean } & Kids) {
  return (
    <text x={x} y={y} fontSize={s} fontStyle={it ? 'italic' : 'normal'} transform={a ? `rotate(${a} ${x} ${y})` : undefined} fill="#333" stroke="none">
      {children}
    </text>
  );
}

/* Support symbol: prism with a clamp rhomb above it. */
function Support({ x, y, k = 1 }: { x: number; y: number; k?: number }) {
  return (
    <path
      transform={`translate(${x} ${y}) scale(${k})`}
      d="M-5 0 0-9 5 0 0 9zM-9.500 9.500H-6L2-2M9.500 9.500H6L-2-2M-5 0-2-2M5 0 2-2"
      strokeWidth=".9"
    />
  );
}

function Clamp({ x, y, k = 1 }: { x: number; y: number; k?: number }) {
  return <path transform={`translate(${x} ${y}) scale(${k})`} d="M0-9 5.500 0 0 9-5.500 0zM0-9V9M-9.500 0h4M5.500 0h4" strokeWidth=".9" />;
}

function Drawing({ h, children }: { h: number } & Kids) {
  return (
    <svg viewBox={`0 0 532 ${h}`} width="532" height={h} fill="none" stroke={GREY} strokeWidth="1" className="block font-['Roboto_Condensed','Liberation_Sans',sans-serif]">
      {children}
    </svg>
  );
}

function SketchA() {
  return (
    <Drawing h={235}>
      <T x={493} y={31} s={14}>Ra 6,3</T>
      <path d="M478 26 484 34.700 492.500 18.500H529" />
      <path d="M78 92.500H26V167.500H78M78 92.500C70 107 73 120 77 130 82 145 82 155 78 167.500M94 92.500H179M94 167.500H179M94 92.500C86 107 89 120 93 130 99 145 98 155 94 167.500" />
      <path d="M22 129.500H386M124.500 62V130" strokeDasharray="14 3 3 3" />
      <path d="M179.500 92V223M382.500 69V223M201.500 69V98M243 162V191M277 155V191" />
      <path d="M179.500 97.500h7v64.500h-7M201.500 97.500H243L277 104.500H382.500V155H277L243 162H201.500zM243 97.500V162M277 104.500V155" stroke={INK} />
      <Dim x1={201} y1={73.5} x2={382} y2={73.5} />
      <path d="M382 73.500h9M227.500 92v6M363.500 98v6M171 187.500H243M382 187.500h8M382 220h6" />
      <Dim x1={227.5} y1={97.5} x2={227.5} y2={162} />
      <Dim x1={363.5} y1={104.5} x2={363.5} y2={155} />
      <Dim x1={243} y1={187.5} x2={277} y2={187.5} />
      <Dim x1={277} y1={187.5} x2={382} y2={187.5} />
      <Dim x1={179} y1={220} x2={382} y2={220} />
      <path d="M267 103Q263 130 267 157" />
      <Arrow x={267.5} y={102} a={-80} />
      <Arrow x={267.5} y={158} a={80} />
      <Mark x={398.5} y={73.5} n="6" />
      <Mark x={227.5} y={85} n="1" />
      <Mark x={363.5} y={91.5} n="3" />
      <Mark x={164.5} y={187.5} n="5" />
      <Mark x={397} y={187.5} n="4" />
      <Mark x={395} y={220} n="2" />
      <T x={275} y={69} s={14}>24</T>
      <T x={291} y={61} s={8}>+0,52</T>
      <T x={220} y={149} s={13} a={-90}>Ø8,5<tspan fontSize="8" dy="3">-0,36</tspan></T>
      <T x={260} y={142} s={13} a={-90}>20**</T>
      <T x={356} y={149} s={13} a={-90}>Ø6,8<tspan fontSize="8" dy="3">-0,36</tspan></T>
      <T x={191} y={183} s={13}>4,5±0,15</T>
      <T x={310} y={183} s={13}>14±0,215</T>
      <T x={261} y={215} s={13}>27±0,26</T>
      <Clamp x={124.5} y={78} />
      <Support x={50} y={129.5} />
      <Support x={124.5} y={129.5} />
      <path d="M16 104v4.500l10 5-10 5v4.500" />
      <T x={9} y={115} it={false}>5</T>
      <T x={115} y={70} it={false}>6</T>
      <T x={41} y={121} it={false}>3</T>
      <T x={115} y={121} it={false}>4</T>
      <T x={43} y={152} it={false}>1</T>
      <T x={117} y={152} it={false}>2</T>
    </Drawing>
  );
}

function SketchB() {
  return (
    <Drawing h={235}>
      <path d="M463 32 469 42 480.500 22.500H525" />
      <T x={482} y={37} s={16}>Ra 6,3</T>
      <path d="M43.500 235V81.500H171V143H43.500M171 81.500 212.500 73.500H216.500M171 143 212.500 151.500H216.500" />
      <path d="M171 81.500V143M212.500 73.500V151.500" stroke="#555" />
      <path d="M39 112.500H258M152.500 38V112" strokeDasharray="16 3 3 3" />
      <path d="M216.500 73V152M216.500 82.500H248L253.500 91V133.500L248 142H216.500M248.500 82.500V142" stroke={INK} strokeWidth="1.300" />
      <path d="M216.500 152V196M253.500 44V91M253.500 133V235M248 82.500H314M248 142H314M253 91H288M253 133.500H288M282.500 133V235M148 191.500H217M309.500 142V152M248.500 82.500 229.500 49" />
      <Dim x1={282.5} y1={91} x2={282.5} y2={133.5} />
      <Dim x1={309.5} y1={82.5} x2={309.5} y2={142} />
      <Dim x1={217} y1={191.5} x2={253} y2={191.5} />
      <path d="M219 64Q235 48 253.500 48L270 50" stroke={INK} />
      <Arrow x={231} y={54} a={-40} />
      <Arrow x={254} y={48.3} a={185} />
      <Mark x={278} y={51.5} n="11" r={8} />
      <Mark x={309.5} y={160} n="8" r={8} />
      <Mark x={141} y={191.5} n="9" r={8} />
      <T x={231} y={46} s={15} a={-8}>30°</T>
      <T x={301} y={131} s={15} a={-84}>6,5<tspan fontSize="10" dy="3">-0,36</tspan></T>
      <T x={272} y={190} s={14} a={-84}>Ø4,5<tspan fontSize="10" dy="3">-0,3</tspan></T>
      <T x={163} y={186} s={15}>4±0,15</T>
      <Clamp x={152.5} y={50} k={1.2} />
      <Support x={72.5} y={112.5} k={1.2} />
      <Support x={152.5} y={112.5} k={1.2} />
      <path d="M31.500 81v4l12 7.500-12 7v4" />
      <T x={23} y={94} s={12} it={false}>5</T>
      <T x={140} y={39} s={12} it={false}>6</T>
      <T x={61} y={102} s={12} it={false}>3</T>
      <T x={140} y={102} s={12} it={false}>4</T>
      <T x={64} y={139} s={12} it={false}>1</T>
      <T x={144} y={139} s={12} it={false}>2</T>
    </Drawing>
  );
}

function SketchC() {
  return (
    <Drawing h={235}>
      <path d="M423 20 429 30.500 440 12.500H481" />
      <T x={441} y={27} s={14}>Ra 6,3</T>
      <path d="M184 96.500H65.500V154H184M184 96.500 222.500 89H227M184 154 222.500 161H227M184.500 96.500V154M222.500 89V161M227 89V161" stroke="#555" />
      <path d="M61 125.500H265M241 100V235M166.500 56V125" strokeDasharray="16 3 3 3" />
      <path d="M227 104H260V146.500H227M227 107.500H256Q263.500 125 256 143.500H227z" stroke={INK} strokeWidth="1.300" />
      <path d="M227 108 256 143M256 108 227 143M227 68V89M260.500 68V104M260 72.500H315.500V82M260 191.500H303M299.500 182V235" />
      <Dim x1={227} y1={72.5} x2={260} y2={72.5} />
      <Mark x={315.5} y={89.5} n="2" r={8} />
      <Mark x={299.5} y={174} n="1" r={8} />
      <Arrow x={299.5} y={192} a={-90} />
      <T x={277} y={66} s={13}>4±0,15</T>
      <T x={295} y={207} s={13} a={-90}>12</T>
      <path d="M220 235V194L223 191.500H260L263 194V235" stroke={INK} strokeWidth="1.300" />
      <path d="M220 202 228 192M220 216 239 192M222 228 250 192M232 228 260 193M243 228 263 204M253 228 263 216" />
      <Clamp x={166.5} y={67} k={1.1} />
      <Support x={92.5} y={125.5} k={1.1} />
      <Support x={166.5} y={125.5} k={1.1} />
      <path d="M54 96.500v4l11 6-11 6v4" />
      <T x={46} y={109} it={false}>5</T>
      <T x={156} y={57} it={false}>6</T>
      <T x={82} y={116} it={false}>3</T>
      <T x={156} y={116} it={false}>4</T>
      <T x={84} y={150} it={false}>1</T>
      <T x={159} y={150} it={false}>2</T>
    </Drawing>
  );
}

function SketchPage({ page, code, op, title, children }: { page: string; code: string; op: string; title?: string } & Kids) {
  const roles = ['Разраб.', 'Провер.', '', '', ''];
  return (
    <Page className="h-[396px]">
      <FormTitle gost="ГОСТ 3.1105-84" form="7" />
      <Stamp />
      <div className="border-r border-black">
        <div className="grid h-[23px] grid-cols-[259px_128px_90px_28px_1fr] text-[9px]">
          <C />
          <C />
          <C>0114000014</C>
          <C />
          <C className="text-[6px]">{page}</C>
        </div>
        <div className="flex h-[43px]">
          <div className="grid w-[179px] grid-cols-[47px_56px_48px_28px] grid-rows-[10px_8px_8px_9px_8px] text-[7px]">
            {roles.map((r, i) => (
              <React.Fragment key={i}>
                <C className="justify-start pl-[3px]">{r}</C>
                <Blank n={3} />
              </React.Fragment>
            ))}
          </div>
          <div className="flex flex-1 flex-col text-[9px]">
            <div className="-mr-0.5 flex h-[27px]">
              <div className="w-20 border-t border-l border-black" />
              <div className="grid flex-1 grid-cols-[109px_80px_1fr] divide-x-2 divide-black border-2 border-black">
                <span />
                <span />
                <span className="flex items-center justify-center">{code}</span>
              </div>
            </div>
            <div className="grid h-4 grid-cols-[33px_241px_20px_20px_20px_1fr]">
              <C />
              <C className="text-[10px]">Винт</C>
              <Blank n={3} />
              <C className="text-[6px]">{op}</C>
            </div>
          </div>
        </div>
        <div className="relative h-[236px] overflow-hidden border-t border-l border-black">
          {title && <div className="absolute inset-x-0 top-1 text-center text-[9px] leading-[10px]">{title}</div>}
          {children}
        </div>
      </div>
      <div className="grid h-[11px] shrink-0 grid-cols-[42px_1fr] border-r border-b border-l border-black">
        <div className={`flex items-center justify-center text-[7px] ${TOP.d}`}>К.Э.</div>
        <C className="text-[9px]">Карта эскизов</C>
      </div>
    </Page>
  );
}

/* ---------- route pages, first visible row ---------- */

type RouteRow = { id: string; cells: string[] };

function RouteTable({ rows, h }: { rows: RouteRow[]; h: string }) {
  return (
    <table className={`w-full table-fixed border-separate border-spacing-0 border-r border-l border-black text-center text-[7px] leading-none whitespace-pre ${h}`}>
      <colgroup>
        <col className="w-[22px]" />
        <col className="w-[19px]" />
        <col className="w-[18px]" />
        <col className="w-[19px]" />
        <col className="w-[29px]" />
        <col className="w-[118px]" />
        <col className="w-[14px]" />
        <col className="w-[19px]" />
        <col className="w-[37px]" />
        <col className="w-[20px]" />
        <col className="w-[24px]" />
        <col className="w-[19px]" />
        <col className="w-[28px]" />
        <col className="w-[24px]" />
        <col className="w-[23px]" />
        <col className="w-[23px]" />
        <col className="w-[33px]" />
        <col className="w-[43px]" />
      </colgroup>
      <tbody>
        {rows.map((r) => (
          <tr key={r.id}>
            <td className={`p-0 ${TOP.d}`}>{r.id}</td>
            {r.cells.map((c, i) => (
              <td key={i} className={`border-t border-l border-t-black p-0 ${i ? 'border-l-[#777]' : 'border-l-black'} ${i < 5 ? 'pl-[3px] text-left' : ''}`}>
                {c}
              </td>
            ))}
          </tr>
        ))}
      </tbody>
    </table>
  );
}

const EMPTY = Array.from({ length: 17 }, () => '');

const ROUTE: RouteRow[] = [
  { id: 'Б12', cells: ['419500', '      Верстак', '', '', '', '', '4', '18466', '2', '1', '1', '1', '1', '40', '1', '12', '1,1'] },
  { id: 'А13', cells: ['', '', '', ' 030', '     0100      Моечная', '', '', '', '', '', '', '', '', '', '', '', ''] },
  { id: 'Б14', cells: ['419500', '     Установка ОМ-14251', '', '', '', '', '4', '-', '4', '1', '1', '1', '1', '48', '1', '14', '19,1'] },
  { id: '15', cells: EMPTY },
];

function RouteFooter({ title, h }: { title: string; h: string }) {
  return (
    <div className={`grid shrink-0 grid-cols-[42px_1fr] border-t border-r border-b border-black ${h}`}>
      <C className="text-[7px]">МК</C>
      <C className="text-[9px]">{title}</C>
    </div>
  );
}

/* ---------- document ---------- */

function Document() {
  return (
    <main className="flex min-w-0 flex-1 justify-center overflow-hidden bg-[#efefef]">
      <div className="grid shrink-0 grid-cols-[561px_561px_561px] content-start gap-x-2 gap-y-[7px]">
        <Page className="h-[75px] border-t-0">
          <div className="flex h-[45px] justify-center border-r border-l border-black">
            <span className="-mt-px pl-[230px] text-[10px]">Разработал:</span>
          </div>
          <div className="grid h-3 grid-cols-[42px_1fr] border-r border-b border-l border-black">
            <div className={`flex items-center justify-center text-[7px] ${TOP.d}`}>ТЛ</div>
            <C className="text-[9px]">Титульный лист</C>
          </div>
        </Page>
        <Page className="h-[75px] justify-end overflow-hidden border-t-0 pb-5">
          <RouteTable rows={ROUTE} h="h-[49px] shrink-0" />
          <RouteFooter title="Маршрутная карта" h="h-3" />
        </Page>
        <Page className="h-[75px] justify-end overflow-hidden border-t-0 pb-[27px]">
          <RouteTable rows={[{ id: '15', cells: EMPTY }, { id: '16', cells: EMPTY }, { id: '17', cells: EMPTY }]} h="h-[42px] shrink-0" />
          <RouteFooter title="МАРШРУТНАЯ КАРТА" h="h-3.5" />
        </Page>

        <OperationPage page="3" code="6014000001" op="005" name="Токарная с ЧПУ" machine="HAAS OL-1" t={['0,19', '1,79', '20', '2,52']} rows={OP5} />
        <ContinuationPage />
        <SketchPage page="5" code="2014000001" op="005" title="Установ А"><SketchA /></SketchPage>

        <SketchPage page="6" code="2014000001" op="005" title="Установ Б"><SketchB /></SketchPage>
        <OperationPage page="7" code="6014000002" op="010" name="Вертикально-фрезерная" machine="6К11" t={['1,56', '1,46', '24', '3,76']} rows={OP10} />
        <SketchPage page="8" code="2014000002" op="010"><SketchC /></SketchPage>
      </div>
    </main>
  );
}

function ScrollBar() {
  return (
    <div className="flex w-[17px] shrink-0 flex-col items-center bg-[#f3f3f3] py-1.5 text-[#707070]">
      <Svg w={10} h={8}><path d="M5 0 10 8H0z" fill="currentColor" stroke="none" /></Svg>
      <div className="flex w-full flex-1 flex-col items-center pt-[132px]">
        <div className="h-[316px] w-[9px] rounded-full bg-[#707070]" />
      </div>
      <Svg w={10} h={8}><path d="M0 0h10L5 8z" fill="currentColor" stroke="none" /></Svg>
    </div>
  );
}

/* ---------- status bar and taskbar ---------- */

function StatusBar() {
  return (
    <footer className="flex h-[22px] shrink-0 items-center justify-between bg-[#f3f3f3] text-[11px] text-[#333]">
      <div className="flex items-center pl-[11px] whitespace-nowrap">
        <button>Страница 1 из 13</button>
        <button className="ml-5">Число слов: 1130</button>
        <button aria-label="Правописание" className="ml-4">
          <Svg w={15} h={13}>
            <path d="M7 2.500V12L.7 11V1L7 2.500 12 1M7 12l4-.7" />
            <path d="m8.500 9 4-7 1.800 1-4 7-2 1z" fill="#fff" />
          </Svg>
        </button>
        <button className="ml-[18px]">русский</button>
        <button className="ml-[19px] flex items-center gap-1">
          <Svg w={14} h={14}>
            <circle cx="6" cy="2.500" r="1.800" />
            <path d="M1 4.500 4 6v3l-2 4 1 .5L5.500 10M11 4.500 8 6v2" strokeWidth="1.200" />
            <path d="M8.500 8.500c.5-2 4-1.500 3.500.5-.2 1-1.500 1.200-1.500 2.500M10.500 12.500v1" strokeWidth="1.200" />
          </Svg>
          Специальные возможности: не поддерживаются
        </button>
      </div>
      <div className="flex h-full items-center pr-3.5">
        <button className="flex items-center gap-0.5">
          <Svg w={14} h={14}>
            <path d="M3 .5H.5v13H3M11 .5h2.500v13H11" />
            <path d="M4 2.500h4l2.500 2.500v6.500H4zM8 2.500V5h2.500" />
          </Svg>
          Фокусировка
        </button>
        <button aria-label="Режим чтения" className="ml-[25px]">
          <Svg w={14} h={13}>
            <path d="M7 2C5 .7 3 .7.5.7v10.500C3 11.200 5 11.200 7 12.500c2-1.300 4-1.300 6.500-1.300V.7C11 .7 9 .7 7 2zM7 2v10M2 4h3M2 6h3M2 8h3M9 4h3M9 6h3M9 8h3" />
          </Svg>
        </button>
        <button aria-label="Разметка страницы" className="mr-[13px] ml-3.5 flex h-full w-10 items-center justify-center bg-[#dedede]">
          <Svg w={11} h={14}>
            <path d="M.5.5h10v13H.5zM2.500 3.500h6M2.500 5.500h6M2.500 7.500h6M2.500 9.500h6M2.500 11.500h6" />
          </Svg>
        </button>
        <button aria-label="Веб-документ">
          <Svg w={15} h={14}>
            <path d="M5 13.500H.5V.5h11V4M2.500 3.500h7M2.500 6h4M2.500 8.500h3" />
            <circle cx="10" cy="9" r="4.300" />
            <path d="M10 4.700v8.600M5.700 9h8.600M7.500 6c2 1 3 1 5 0M7.500 12c2-1 3-1 5 0" />
          </Svg>
        </button>
        <button aria-label="Уменьшить" className="ml-[18px]"><Svg w={9} h={9}><path d="M0 4.500h9" strokeWidth="1.200" /></Svg></button>
        <div className="relative mx-1.5 h-4 w-[100px]">
          <input aria-label="Масштаб" type="range" min="10" max="190" defaultValue="50" className="absolute inset-0 w-full opacity-0" />
          <Svg w={100} h={16}>
            <path d="M0 8h100M50.500 4.500v7" stroke="#888" />
            <path d="M22 2h5v12h-5z" fill="#606060" stroke="none" />
          </Svg>
        </div>
        <button aria-label="Увеличить"><Svg w={9} h={9}><path d="M0 4.500h9M4.500 0v9" strokeWidth="1.200" /></Svg></button>
        <button className="ml-3">50 %</button>
      </div>
    </footer>
  );
}

function TaskBar() {
  return (
    <div className="flex h-2 shrink-0 gap-[3px] overflow-hidden bg-gradient-to-r from-[#22343c] to-[#152338] pr-20 pl-[52px]">
      {['1', '2', '3', '4', '5'].map((k) => (
        <span key={k} className="mt-px h-2 w-[46px] border border-[#7d888d] bg-[#4a585f]" />
      ))}
      <span className="mt-px h-2 w-[46px] border border-[#c5cacd] bg-[#74808a]" />
      <span className="ml-auto pt-[5px] text-[11px] leading-none text-white">16:42</span>
    </div>
  );
}

export default function App() {
  return (
    <div className="flex h-screen flex-col overflow-hidden bg-[#efefef] font-['Noto_Sans',sans-serif]">
      <TitleBar />
      <TabBar />
      <Ribbon />
      <TopRuler />
      <div className="flex min-h-0 flex-1">
        <SideRuler />
        <Document />
        <ScrollBar />
      </div>
      <StatusBar />
      <TaskBar />
    </div>
  );
}
